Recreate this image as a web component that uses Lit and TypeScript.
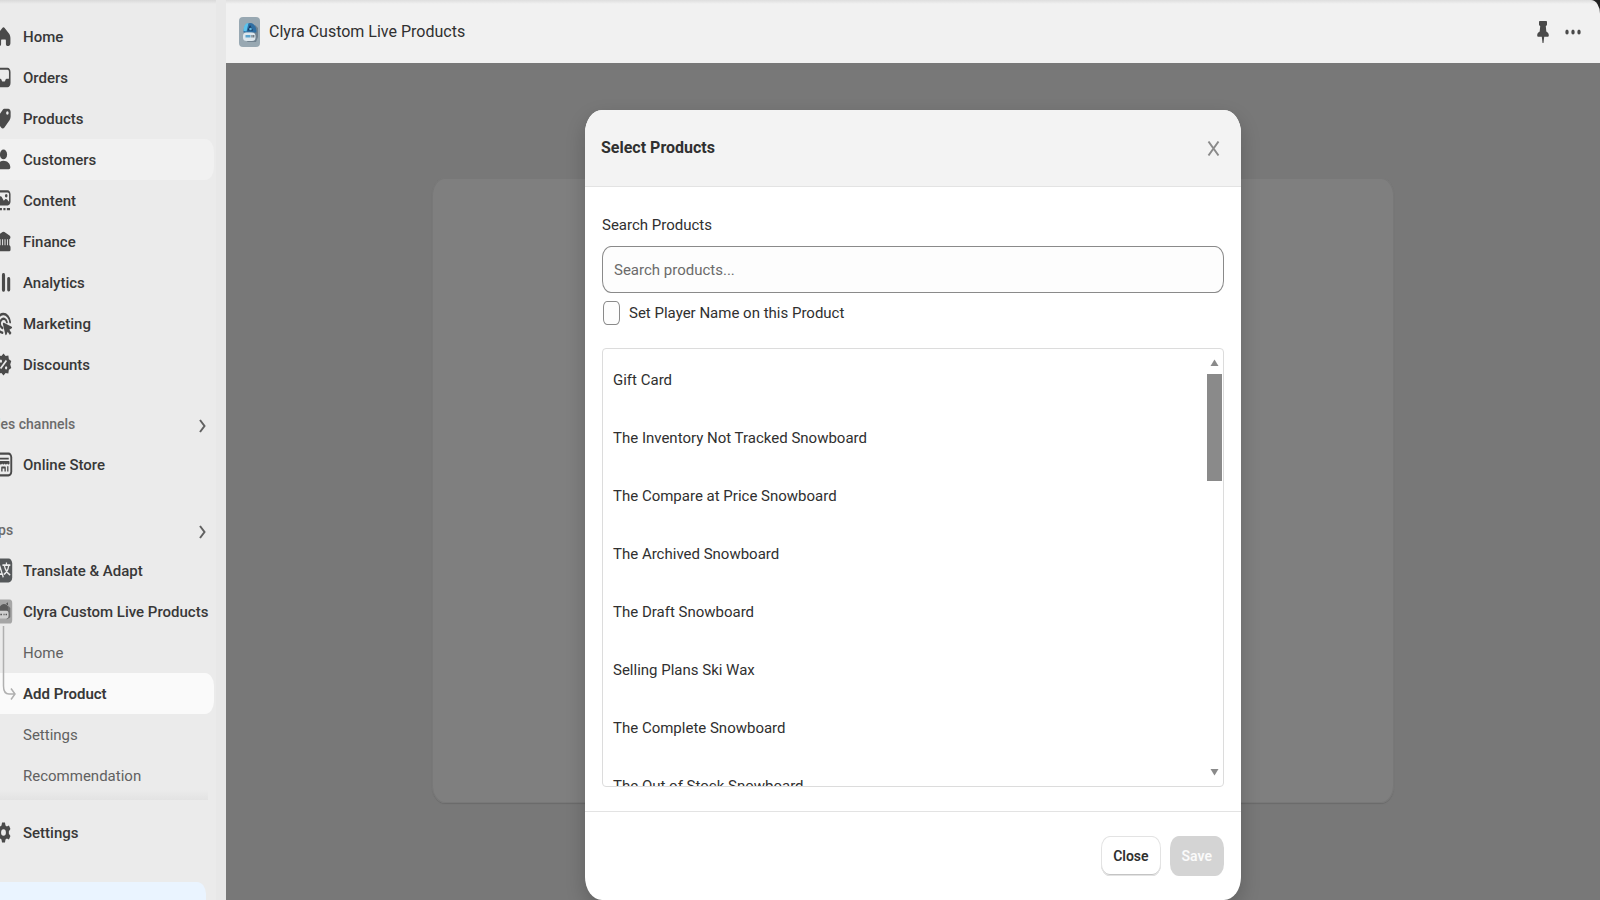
import { LitElement, html, svg, css, nothing } from "lit";
import { customElement, property, state } from "lit/decorators.js";
import { classMap } from "lit/directives/class-map.js";

const icons: Record<string, unknown> = {
  home: svg`<path d="M8.9 4.1a1.6 1.6 0 0 1 2.200 0l4.100 3.800c.9.9 1.400 2 1.400 3.300v3.300c0 1.100-.8 2-1.900 2h-1.200c-.7 0-1.200-.6-1.200-1.300v-2.400c0-.5-.3-.8-.8-.8h-3c-.5 0-.8.3-.8.8v2.400c0 .7-.5 1.300-1.200 1.300H5.300c-1.100 0-1.900-.9-1.900-2v-3.300c0-1.300.5-2.400 1.400-3.300z"/>`,
  orders: svg`<path fill-rule="evenodd" d="M6.200 3.300h7.600c1.600 0 2.900 1.300 2.900 2.900v7.600c0 1.600-1.300 2.900-2.900 2.900H6.200a2.900 2.900 0 0 1-2.900-2.900V6.200c0-1.600 1.300-2.900 2.900-2.900zm0 1.400c-.8 0-1.400.6-1.400 1.500v4.600h2.100c.6 0 1 .3 1.200.8l.3.700c.1.300.3.400.6.400h2c.3 0 .5-.1.6-.4l.3-.7c.2-.5.6-.8 1.200-.8h2.100V6.200c0-.9-.6-1.500-1.400-1.500z"/>`,
  products: svg`<path fill-rule="evenodd" d="M11.300 3.300h3.200c1.300 0 2.300 1 2.300 2.300v3.100c0 .9-.3 1.700-.9 2.300l-5 5.200c-.9.9-2.300.9-3.200 0l-3.600-3.600c-.9-.9-.9-2.300 0-3.200l4.900-5.100c.6-.7 1.400-1 2.300-1zm2.400 4.100a1.200 1.200 0 1 0 0-2.400 1.200 1.200 0 0 0 0 2.400z"/>`,
  customers: svg`<circle cx="10" cy="6.500" r="3.400"/><path d="M10 10.900c3.600 0 6.500 2 6.500 4.500 0 .8-.6 1.300-1.400 1.300H4.900c-.8 0-1.400-.5-1.400-1.300 0-2.500 2.900-4.500 6.500-4.500z"/>`,
  content: svg`<path fill-rule="evenodd" d="M6 3h8c1.500 0 2.700 1.200 2.700 2.700v5c0 1.500-1.200 2.700-2.700 2.700H6a2.700 2.700 0 0 1-2.700-2.700v-5C3.300 4.200 4.500 3 6 3zM6 4.400c-.7 0-1.200.5-1.200 1.200V8.800l1.500-1.300c.6-.5 1.500-.5 2 .1l2 2.500 1.300-.9c.6-.4 1.300-.3 1.800.1l1.900 1.500V5.600c0-.7-.6-1.200-1.300-1.200z"/><circle cx="12.600" cy="6.800" r="1.200"/><path d="M3.500 15.200h5v1.500h-5zM9.900 15.200h2v1.500h-2zM13.200 15.200h3v1.500h-3z"/>`,
  finance: svg`<path fill-rule="evenodd" d="M9.100 3.500a2 2 0 0 1 1.800 0l4.800 2.300c.6.300.9.700.9 1.300 0 .7-.5 1.200-1.100 1.300v4.200c.7.200 1.200.8 1.200 1.500v1.600c0 .6-.4 1-1 1H4.300c-.6 0-1-.4-1-1v-1.600c0-.7.500-1.300 1.200-1.500V8.400a1.400 1.400 0 0 1-1.100-1.300c0-.6.300-1 .9-1.300zM6 8.500v4h1.200v-4zm2.700 0v4h.9v-4zm2.300 0v4h.9v-4zm2.400 0v4h.8v-4z"/>`,
  analytics: svg`<rect x="3.200" y="9.200" width="2.800" height="7" rx="1.200"/><rect x="8.500" y="3.500" width="3" height="12.800" rx="1.300"/><rect x="13.500" y="6.200" width="2.900" height="10" rx="1.200"/>`,
  marketing: svg`<path fill="none" stroke="currentColor" stroke-width="1.700" stroke-linecap="round" d="M16.300 9.100a6.500 6.500 0 1 0-7.300 7.300"/><path fill="none" stroke="currentColor" stroke-width="1.700" stroke-linecap="round" d="M13.200 9a3.300 3.300 0 1 0-4.200 4.100"/><path d="M10.300 9.500l7.500 2.700c.5.200.5.800 0 1l-2.200 1.100 2 2.200-1.500 1.400-2.100-2.200-1.200 2c-.3.500-.9.400-1.100-.1L9.400 10.400c-.2-.6.3-1.100.9-.9z"/>`,
  discounts: svg`<path fill-rule="evenodd" d="M10 2.400l2 1.700 2.600-.3.500 2.500 2.300 1.300-1 2.400 1 2.400-2.300 1.300-.5 2.500-2.600-.3-2 1.700-2-1.700-2.600.3-.5-2.500-2.300-1.300 1-2.400-1-2.400 2.300-1.300.5-2.500 2.600.3zM12.300 6.700l-5.600 5.600 1 1 5.600-5.600zM7.500 6.600a1.100 1.100 0 1 0 0 2.200 1.100 1.100 0 0 0 0-2.200zm5 4.600a1.100 1.100 0 1 0 0 2.200 1.100 1.100 0 0 0 0-2.200z"/>`,
  store: svg`<rect x="1.700" y="1.700" width="16.600" height="16.600" rx="3.500"/><rect x="3.700" y="3.300" width="12.800" height="13.400" rx="2" fill="#ebebeb"/><path d="M5 5.300h10v1.300H5zM4.500 7.500h11l.3 1.600c-.2 1.200-2 1.200-2.300.2-.5 1-2 1-2.400 0-.4 1-1.900 1-2.400 0-.4 1-1.900 1-2.400 0-.4 1-2 .9-2.200-.2zM5.300 11.200h1.200v3.600H5.300zM13.500 11.200h1.200v3.600h-1.200zM7.800 12.200c0-.5.300-.8.800-.8h2.800c.5 0 .8.300.8.800v2.600h-1.300v-2h-1.800v2H7.800z"/>`,
  translate: svg`<rect x="1.700" y="1.700" width="16.600" height="16.600" rx="3.500" fill="#55585a"/><path fill="none" stroke="#ebebeb" stroke-width="1.200" d="M4 14.800l2.800-7 3 7M5 12.500h3.600M9 6.300h7.500M12.800 4.500v1.800M15 6.500c-.5 3-2.300 5.200-4.800 6.300M10.800 6.500c.8 3 2.700 5.200 5.600 6.600"/>`,
  clyra: svg`<rect x="1.700" y="1.700" width="16.600" height="16.600" rx="2.500" fill="#a6a6a6"/><path d="M5.500 10c0-3 2-5.200 5-5.200s5 2.200 5 5.200z" fill="#5a5a5a"/><path d="M12.500 4.600l1.500-1 .4 2.200z" fill="#4b4b4b"/><path d="M13 15.500l3.500-1.500V7.500l-2-1.500z" fill="#6e6e6e"/><rect x="4.500" y="9.500" width="10.300" height="5.300" rx="2" fill="#cfcfcf"/><path d="M7 11.500h1.500v1H7zM10 11.500h1v1h-1zM12 11.500h1.300v1H12z" fill="#555"/>`,
  gear: svg`<path fill-rule="evenodd" d="M8.600 3.100h2.800l.5 2.100 1.300.7 2-.7 1.400 2.400-1.500 1.500v1.800l1.500 1.500-1.400 2.400-2-.7-1.300.7-.5 2.100H8.600l-.5-2.100-1.300-.7-2 .7-1.400-2.400 1.500-1.500V9.100L3.400 7.600l1.400-2.400 2 .7 1.300-.7zM10 7.700a2.300 2.300 0 1 0 0 4.600 2.300 2.300 0 0 0 0-4.600z"/>`,
};

interface NavEntry {
  label: string;
  icon: string;
  hovered?: boolean;
}

const mainNav: NavEntry[] = [
  { label: "Home", icon: "home" },
  { label: "Orders", icon: "orders" },
  { label: "Products", icon: "products" },
  { label: "Customers", icon: "customers", hovered: true },
  { label: "Content", icon: "content" },
  { label: "Finance", icon: "finance" },
  { label: "Analytics", icon: "analytics" },
  { label: "Marketing", icon: "marketing" },
  { label: "Discounts", icon: "discounts" },
];

const subNav = ["Home", "Add Product", "Settings", "Recommendation"];

const products = [
  "Gift Card",
  "The Inventory Not Tracked Snowboard",
  "The Compare at Price Snowboard",
  "The Archived Snowboard",
  "The Draft Snowboard",
  "Selling Plans Ski Wax",
  "The Complete Snowboard",
  "The Out of Stock Snowboard",
];

@customElement("admin-sidebar")
class AdminSidebar extends LitElement {
  static styles = css`
    :host {
      display: block;
      box-sizing: border-box;
      overflow: hidden;
      background: linear-gradient(#d9d9d9, #ebebeb 4px);
      border-right: 10px solid #e8e8e8;
      font-size: 15px;
      line-height: 20px;
      font-weight: 500;
      color: #383838;
    }
    .inner {
      display: flex;
      flex-direction: column;
      height: 100%;
      margin-left: -19px;
    }
    .scroll {
      flex: 1;
      min-height: 0;
      overflow: hidden;
      padding-top: 16px;
    }
    .list {
      list-style: none;
      margin: 0;
      padding: 0;
    }
    .item {
      display: flex;
      align-items: center;
      gap: 9px;
      height: 41px;
      padding-left: 12px;
      margin-right: 2px;
      border-radius: 9px / 13px;
      color: inherit;
      text-decoration: none;
      white-space: nowrap;
    }
    .hovered {
      background: #f1f1f1;
    }
    .current {
      background: #fafafa;
      font-weight: 600;
    }
    .sub {
      padding-left: 42px;
    }
    .sub:not(.current) {
      font-weight: 400;
      color: #616161;
    }
    .icon {
      flex: none;
      width: 21px;
      height: 29px;
      fill: currentColor;
      color: #4a4a4a;
    }
    .section {
      display: flex;
      align-items: center;
      justify-content: space-between;
      width: 100%;
      height: 41px;
      margin-top: 18px;
      padding: 0 10px 0 0;
      border: 0;
      background: none;
      font: inherit;
      font-size: 14px;
      color: #6b6b6b;
    }
    .section.apps {
      margin-top: 24px;
    }
    .chevron {
      width: 7px;
      height: 14px;
      margin-top: 4px;
      fill: none;
      stroke: #616161;
      stroke-width: 2;
    }
    .tree {
      position: relative;
    }
    .branch {
      position: absolute;
      left: 21px;
      top: -6px;
      width: 14px;
      height: 76px;
      fill: none;
      stroke: #b0b0b0;
      stroke-width: 1.500;
    }
    .footer {
      position: relative;
      padding-top: 12px;
    }
    .footer::before {
      content: "";
      position: absolute;
      left: 0;
      right: 8px;
      bottom: 100%;
      height: 10px;
      background: linear-gradient(transparent, #e3e3e3);
    }
    .notice {
      height: 18px;
      margin: 29px 10px 0 0;
      border-radius: 0 9px 0 0 / 0 12px 0 0;
      background: #eaf4ff;
    }
  `;

  private link(e: NavEntry) {
    return html`<li>
      <a class=${classMap({ item: true, hovered: !!e.hovered })} href="#">
        <svg class="icon" viewBox="0 0 20 20" preserveAspectRatio="none" aria-hidden="true">${icons[e.icon]}</svg>
        <span>${e.label}</span>
      </a>
    </li>`;
  }

  private section(label: string, extra = "") {
    return html`<button class="section ${extra}" type="button">
      <span>${label}</span>
      <svg class="chevron" viewBox="0 0 7 14" aria-hidden="true"><path d="M1 1l4.500 6L1 13" /></svg>
    </button>`;
  }

  render() {
    return html`<div class="inner">
      <nav class="scroll" aria-label="Main">
        <ul class="list">${mainNav.map((e) => this.link(e))}</ul>
        ${this.section("Sales channels")}
        <ul class="list">${this.link({ label: "Online Store", icon: "store" })}</ul>
        ${this.section("Apps", "apps")}
        <ul class="list">
          ${this.link({ label: "Translate & Adapt", icon: "translate" })}
          ${this.link({ label: "Clyra Custom Live Products", icon: "clyra" })}
        </ul>
        <ul class="list tree">
          ${subNav.map(
            (label) => html`<li>
              <a
                class=${classMap({ item: true, sub: true, current: label === "Add Product" })}
                aria-current=${label === "Add Product" ? "page" : nothing}
                href="#"
                >${label}</a
              >
            </li>`
          )}
          <svg class="branch" viewBox="0 0 14 76" aria-hidden="true">
            <path d="M1.500 0V60Q1.500 68 7 68H12.500M9 62.500L13 68L9 73.500" />
          </svg>
        </ul>
      </nav>
      <div class="footer">
        <ul class="list">${this.link({ label: "Settings", icon: "gear" })}</ul>
        <div class="notice"></div>
      </div>
    </div>`;
  }
}

@customElement("product-picker")
class ProductPicker extends LitElement {
  @state() private query = "";
  @property({ type: Boolean }) withName = false;

  static styles = css`
    :host {
      display: flex;
      flex-direction: column;
      box-sizing: border-box;
      overflow: hidden;
      border-radius: 17px / 23px;
      background: #fff;
      box-shadow: 0 8px 20px rgba(0, 0, 0, 0.2);
      font-size: 15px;
      line-height: 20px;
      color: #303030;
    }
    .head {
      display: flex;
      align-items: center;
      justify-content: space-between;
      height: 76px;
      padding: 0 21px 0 16px;
      border-bottom: 1px solid #e3e3e3;
      background: #f3f3f3;
    }
    .title {
      margin: 0;
      font-size: 16px;
      font-weight: 700;
    }
    .x {
      display: flex;
      padding: 0;
      border: 0;
      background: none;
    }
    .x-icon {
      width: 13px;
      height: 17px;
      fill: none;
      stroke: #8a8a8a;
      stroke-width: 2;
    }
    .body {
      flex: 1;
      min-height: 0;
      display: flex;
      flex-direction: column;
      padding: 28px 17px 24px;
    }
    .search {
      box-sizing: border-box;
      height: 47px;
      margin: 11px 0 8px;
      padding: 0 11px;
      border: 1px solid #8a8a8a;
      border-radius: 9px / 12px;
      background: #fdfdfd;
      font: inherit;
      color: inherit;
    }
    .search::placeholder {
      color: #6b6b6b;
      opacity: 1;
    }
    .check {
      display: flex;
      align-items: center;
      gap: 9px;
      padding-left: 1px;
    }
    .box {
      appearance: none;
      box-sizing: border-box;
      width: 17px;
      height: 24px;
      margin: 0;
      border: 1px solid #8a8a8a;
      border-radius: 4px / 6px;
      background: #fdfdfd;
    }
    .panel {
      flex: 1;
      min-height: 0;
      display: flex;
      overflow: hidden;
      margin-top: 23px;
      border: 1px solid #dcdcdc;
      border-radius: 4px;
    }
    .items {
      flex: 1;
      list-style: none;
      margin: 0;
      padding: 2px 0 0;
    }
    .row {
      display: flex;
      align-items: center;
      width: 100%;
      height: 58px;
      padding: 0 10px;
      border: 0;
      background: none;
      font: inherit;
      color: inherit;
    }
    .bar {
      display: flex;
      flex-direction: column;
      justify-content: space-between;
      width: 15px;
      padding: 10px 1px 10px 0;
    }
    .arrow {
      display: block;
      width: 15px;
      height: 7px;
      fill: #8a8a8a;
    }
    .thumb {
      height: 107px;
      margin-top: 8px;
      margin-bottom: auto;
      background: #8a8a8a;
    }
    .foot {
      display: flex;
      justify-content: flex-end;
      gap: 9px;
      padding: 24px 17px;
      border-top: 1px solid #e3e3e3;
    }
    .btn {
      height: 40px;
      padding: 0 12px;
      border: 0;
      border-radius: 9px / 12px;
      background: #fff;
      box-shadow: inset 0 0 0 1px #e3e3e3, inset 0 -2px 0 #c4c4c4;
      font: inherit;
      font-size: 14px;
      font-weight: 600;
      color: #303030;
    }
    .btn:disabled {
      background: #d4d4d4;
      box-shadow: none;
      color: #fafafa;
    }
  `;

  render() {
    const shown = products.filter((p) => p.toLowerCase().includes(this.query.toLowerCase()));
    return html`
      <header class="head">
        <h2 class="title">Select Products</h2>
        <button class="x" type="button" aria-label="Dismiss">
          <svg class="x-icon" viewBox="0 0 13 17"><path d="M1.500 1.500l10 14M11.500 1.500l-10 14" /></svg>
        </button>
      </header>
      <div class="body">
        <label for="search">Search Products</label>
        <input
          id="search"
          class="search"
          type="text"
          placeholder="Search products..."
          .value=${this.query}
          @input=${(e: Event) => (this.query = (e.target as HTMLInputElement).value)}
        />
        <label class="check">
          <input class="box" type="checkbox" .checked=${this.withName} />
          <span>Set Player Name on this Product</span>
        </label>
        <div class="panel">
          <ul class="items">
            ${shown.map((p) => html`<li><button class="row" type="button">${p}</button></li>`)}
          </ul>
          <div class="bar" aria-hidden="true">
            <svg class="arrow" viewBox="0 0 15 7"><path d="M3.500 7L7.500 0.500L11.500 7z" /></svg>
            <div class="thumb"></div>
            <svg class="arrow" viewBox="0 0 15 7"><path d="M3.500 0L7.500 6.500L11.500 0z" /></svg>
          </div>
        </div>
      </div>
      <footer class="foot">
        <button class="btn" type="button">Close</button>
        <button class="btn" type="button" disabled>Save</button>
      </footer>
    `;
  }
}

@customElement("app-root")
class AppRoot extends LitElement {
  static styles = css`
    :host {
      display: grid;
      grid-template-columns: 226px 1fr;
      height: 100vh;
      overflow: hidden;
      background: #222;
      font-family: Roboto, Inter, sans-serif;
      color: #303030;
    }
    .main {
      display: flex;
      flex-direction: column;
      min-width: 0;
      min-height: 0;
    }
    .top {
      display: flex;
      align-items: center;
      gap: 9px;
      height: 63px;
      padding: 0 19px 0 13px;
      border-top-right-radius: 9px 14px;
      background: linear-gradient(#dedede, #f1f1f1 4px);
    }
    .logo {
      width: 21px;
      height: 30px;
    }
    .name {
      flex: 1;
      margin: 0;
      font-size: 16px;
      line-height: 24px;
      font-weight: 400;
    }
    .tool {
      display: flex;
      padding: 0;
      border: 0;
      background: none;
    }
    .pin {
      width: 12px;
      height: 22px;
      fill: #4a4a4a;
    }
    .dots {
      width: 16px;
      height: 6px;
      margin-left: 7px;
      fill: #4a4a4a;
    }
    .stage {
      position: relative;
      flex: 1;
      min-height: 0;
      background: #787878;
    }
    .wrap {
      display: flow-root;
    }
    .card {
      width: 70%;
      height: 625px;
      margin: 115px auto 0;
      border-radius: 13px / 18px;
      background: #7f7f7f;
      box-shadow: 0 1px 1px #6a6a6a, inset 0 0 0 1px #787878;
    }
    .layer {
      position: absolute;
      inset: 0;
      display: flex;
      justify-content: center;
      padding-top: 47px;
    }
    .picker {
      width: 100%;
      max-width: 656px;
    }
  `;

  render() {
    return html`
      <admin-sidebar></admin-sidebar>
      <div class="main">
        <header class="top">
          <svg class="logo" viewBox="0 0 21 30" aria-hidden="true">
            <rect width="21" height="30" rx="4" fill="#98a8b2" />
            <path d="M8 25h9l2-5v-9l-3-3z" fill="#71828f" />
            <path d="M4.500 15.500C4.500 9.500 7 6 11 6s6.500 3.500 6.500 9.500z" fill="#2e6ea3" />
            <path d="M4.500 14c0-5 2-8 5-8l-2 8.500z" fill="#5cc3ec" />
            <path d="M11 8l3 5.500h-5.500z" fill="#173a5e" />
            <circle cx="11.500" cy="12" r="1.300" fill="#63b9e4" />
            <rect x="4" y="15.500" width="12.500" height="8.500" rx="3.500" fill="#dde7ed" />
            <path d="M6.500 18h5v2.500h-5z" fill="#5ca4cd" />
            <path d="M12.500 18h1v2.500h-1zM14.300 18h1v2.500h-1z" fill="#45525e" />
          </svg>
          <h1 class="name">Clyra Custom Live Products</h1>
          <button class="tool" type="button" aria-label="Pin">
            <svg class="pin" viewBox="0 0 12 22">
              <path d="M3 0h6c.7 0 1 .5 1 1v2.500c0 .8-.6 1.200-1.200 1.500l.5 5.500c1.500.8 2.500 2 2.500 3.800 0 1-.5 1.500-1.300 1.500H7.200L6.500 22h-1l-.7-6.200H1.500C.7 15.800.2 15.300.2 14.300c0-1.800 1-3 2.500-3.800L3.200 5C2.600 4.700 2 4.300 2 3.500V1c0-.5.3-1 1-1z" />
            </svg>
          </button>
          <button class="tool" type="button" aria-label="More">
            <svg class="dots" viewBox="0 0 16 6">
              <ellipse cx="2" cy="3" rx="1.700" ry="2.500" /><ellipse cx="8" cy="3" rx="1.700" ry="2.500" /><ellipse cx="14" cy="3" rx="1.700" ry="2.500" />
            </svg>
          </button>
        </header>
        <main class="stage">
          <div class="wrap"><div class="card"></div></div>
          <div class="layer">
            <product-picker class="picker" role="dialog" aria-label="Select Products"></product-picker>
          </div>
        </main>
      </div>
    `;
  }
}
